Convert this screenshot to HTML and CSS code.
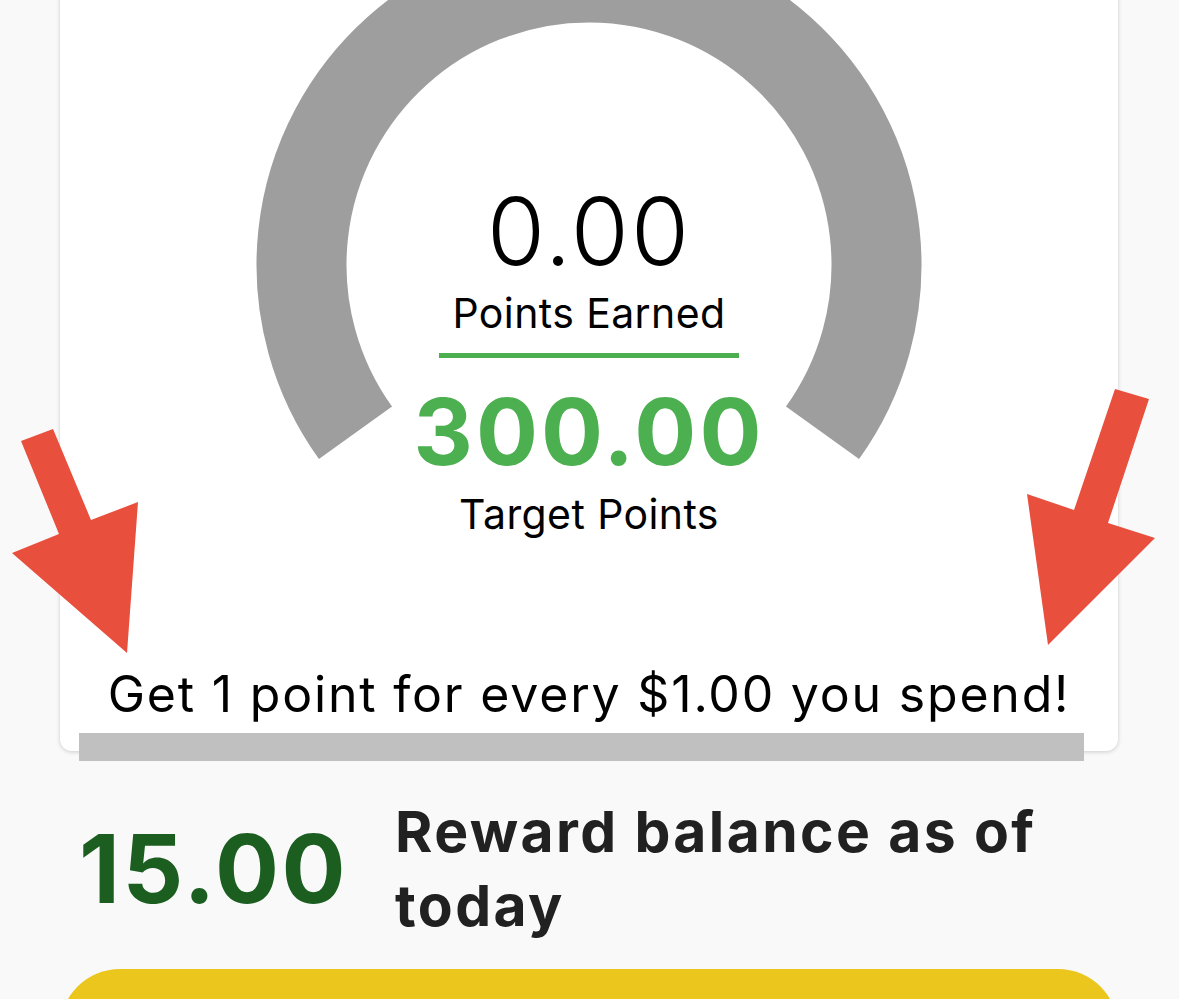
FILE: index.html
```html
<html lang="en">
<head>
  <meta charset="UTF-8">
  <title>Rewards</title>
  <link rel="stylesheet" href="styles.css">
</head>
<body>
  <div class="screen">
    <div class="card">
      <div class="gauge">
        <svg class="gauge-arc" width="666" height="532" viewBox="0 0 666 532">
          <path d="M 99.5 499.7 A 287.5 287.5 0 1 1 566.5 499.7" fill="none" stroke="#9e9e9e" stroke-width="90"/>
        </svg>
        <div class="gauge-text">
          <div class="earned">0.00</div>
          <div class="label earned-label">Points Earned</div>
          <div class="divider"></div>
          <div class="target">300.00</div>
          <div class="label">Target Points</div>
        </div>
      </div>
      <p class="promo">Get 1 point for every $1.00 you spend!</p>
      <div class="progress"></div>
    </div>

    <div class="balance">
      <div class="balance-value">15.00</div>
      <div class="balance-text">Reward balance as of today</div>
    </div>

    <button class="redeem"></button>
  </div>

  <!-- annotation arrows drawn over the screenshot -->
  <svg class="arrows" width="1179" height="999" viewBox="0 0 1179 999">
    <polygon points="21,441 53,429 91,520 138,502 127,653 12,553 59,534" fill="#e84f3d"/>
    <polygon points="1115,389 1149,399 1108,523 1155,538 1048,645 1027,494 1074,510" fill="#e84f3d"/>
  </svg>
</body>
</html>
```

FILE: styles.css
```css
body {
  margin: 0;
  background: #f9f9f9;
  font-family: Inter, "Noto Sans", sans-serif;
  color: #000;
  overflow: hidden;
}
.screen {
  padding: 0 61px 0 60px;
}
.card {
  margin-top: -100px;
  padding-top: 33px;
  background: #fff;
  border-radius: 12px;
  box-shadow: 0 1px 4px rgba(0,0,0,0.18);
  display: flex;
  flex-direction: column;
  align-items: center;
}
.gauge {
  display: grid;
  justify-items: center;
}
.gauge-arc,
.gauge-text {
  grid-area: 1 / 1;
}
.gauge-text {
  padding-top: 248px;
  display: flex;
  flex-direction: column;
  align-items: center;
}
.earned {
  font-size: 94px;
  font-weight: 300;
  line-height: 100px;
  letter-spacing: 2px;
}
.label {
  font-size: 41px;
  line-height: 48px;
  margin-top: 8px;
  letter-spacing: 0.4px;
}
.divider {
  width: 300px;
  height: 5px;
  margin-top: 16px;
  background: #4caf50;
}
.target {
  margin-top: 24px;
  font-size: 92px;
  font-weight: 700;
  line-height: 100px;
  letter-spacing: 3px;
  color: #4caf50;
}
.promo {
  margin: 126px 0 0;
  font-size: 50px;
  line-height: 60px;
  letter-spacing: 1.8px;
}
.progress {
  align-self: stretch;
  height: 28px;
  margin: 9px 34px -10px 19px;
  background: #c0c0c0;
}
.balance {
  display: flex;
  align-items: center;
  gap: 47px;
  margin: 44px 0 0 19px;
}
.balance-value {
  font-size: 95px;
  font-weight: 700;
  line-height: 100px;
  letter-spacing: 2.5px;
  color: #1b5e20;
}
.balance-text {
  font-size: 57px;
  font-weight: 700;
  line-height: 74px;
  letter-spacing: 2.4px;
  color: #212121;
}
.redeem {
  display: block;
  width: 100%;
  height: 120px;
  margin-top: 26px;
  border: none;
  border-radius: 60px;
  background: #ebc61c;
}
.arrows {
  position: absolute;
  top: 0;
  left: 0;
}
```
